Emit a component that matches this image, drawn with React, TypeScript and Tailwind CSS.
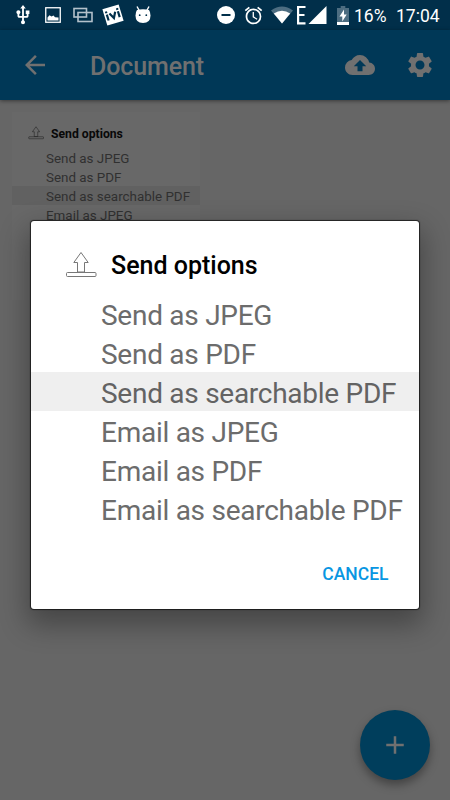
import React from 'react';
import { MdArrowBack, MdCloudUpload, MdSettings, MdAdd, MdUsb, MdAlarm } from 'react-icons/md';

const options = [
  'Send as JPEG',
  'Send as PDF',
  'Send as searchable PDF',
  'Email as JPEG',
  'Email as PDF',
  'Email as searchable PDF',
];

const SELECTED = 'Send as searchable PDF';

const UploadIcon: React.FC<{ className?: string }> = ({ className }) => (
  <svg viewBox="0 0 32 28" className={className} fill="none" stroke="currentColor" strokeWidth="1">
    <path d="M16 1.5 L23.2 11.5 H19.5 V21 H12.5 V11.5 H8.8 Z" strokeLinejoin="round" />
    <rect x="1.5" y="21.5" width="29.5" height="4" rx="1" />
  </svg>
);

const StatusBar: React.FC = () => (
  <div className="flex h-[30px] items-center bg-[#012f4a] text-white">
    <MdUsb className="ml-[12px] h-[22px] w-[22px]" />
    <svg viewBox="0 0 16 16" className="ml-[11px] h-4 w-4">
      <rect x="0.75" y="0.75" width="14.5" height="14.5" fill="none" stroke="white" strokeWidth="1.3" />
      <path d="M2.5 13.5 V10.5 L4.5 8.2 L6.5 9.5 L8.5 8.5 L10 10.2 L13.5 10.5 V13.5 Z" fill="white" />
    </svg>
    <svg viewBox="0 0 20 16" className="ml-[12px] h-4 w-5 text-[#b3c1cb]" fill="none" stroke="currentColor" strokeWidth="1.6">
      <rect x="1" y="1.5" width="12.5" height="8.5" />
      <rect x="5" y="5.5" width="14" height="9" />
    </svg>
    <svg viewBox="0 0 22 22" className="ml-[9px] h-[22px] w-[22px]">
      <g transform="rotate(-17 11 11)">
        <rect x="2.5" y="2.5" width="17" height="17" fill="white" />
        <g stroke="#012f4a" strokeWidth="2.2" fill="none">
          <path d="M5.2 8.8 V15 M8 8.6 L11 14.2 L14 8.6 M16.8 8.8 V15" />
          <path d="M5.2 5.6 V7.4 M16.8 5.6 V7.4" />
        </g>
      </g>
    </svg>
    <svg viewBox="0 0 16 18" className="ml-[11px] h-[18px] w-4 text-white">
      <path d="M2 0.5 L4.2 4.5 M14 0.5 L11.8 4.5" stroke="currentColor" strokeWidth="1.4" />
      <path d="M2 4 Q8 2.4 14 4 Q15.5 6 15.5 9.5 Q15.5 17 8 17 Q0.5 17 0.5 9.5 Q0.5 6 2 4 Z" fill="currentColor" />
      <circle cx="4.7" cy="9.2" r="0.9" fill="#012f4a" />
      <circle cx="11.3" cy="9.2" r="0.9" fill="#012f4a" />
    </svg>

    <svg viewBox="0 0 18 18" className="ml-[66px] h-[18px] w-[18px]">
      <circle cx="9" cy="9" r="9" fill="white" />
      <path d="M4.5 9 H13.5" stroke="#012f4a" strokeWidth="2" />
    </svg>
    <MdAlarm className="ml-[8px] h-[21px] w-[21px]" />
    <svg viewBox="0 0 22 18" className="ml-[7px] h-[18px] w-[22px]">
      <path d="M11 17.5 L0 4.5 Q11 -3.5 22 4.5 Z" fill="#4d6d81" />
      <path d="M11 17.5 L2.8 7.6 Q11 1.8 19.2 7.6 Z" fill="white" />
    </svg>
    <svg viewBox="0 0 32 20" className="ml-[4px] h-5 w-8">
      <path d="M8.5 2 H1.1 V18.3 H8.5 M1 10 H7.5" fill="none" stroke="white" strokeWidth="2.2" />
      <path d="M29.5 1 V19 H11.5 Z" fill="white" />
    </svg>
    <svg viewBox="0 0 12 19" className="ml-[8px] h-[19px] w-[12px]">
      <path d="M3.7 0 H8.3 V2 H12 V19 H0 V2 H3.7 Z" fill="#4d6d81" />
      <rect y="16" width="12" height="3" fill="white" />
      <path d="M7 3.5 L2.5 10.5 H5.3 V15.5 L9.7 8.6 H7 Z" fill="white" />
    </svg>
    <span className="ml-[5px] w-[33px] whitespace-nowrap pt-[3px] text-[17.5px] leading-none">16%</span>
    <span className="ml-[9px] whitespace-nowrap pt-[3px] text-[17.5px] leading-none">17:04</span>
  </div>
);

const AppBar: React.FC = () => (
  <header className="relative flex h-[70px] items-center bg-[#003857] text-[#707070] shadow-[0_1px_4px_rgba(0,0,0,0.45)]">
    <MdArrowBack className="ml-[20px] h-[30px] w-[30px]" />
    <h1 className="ml-[40px] pt-[2px] text-[25px] font-medium leading-none tracking-[-0.1px]">Document</h1>
    <MdCloudUpload className="ml-auto h-[30px] w-[30px]" />
    <MdSettings className="ml-[30px] mr-[15px] h-[30px] w-[30px]" />
  </header>
);

/** Thumbnail of the scanned page behind the dialog. */
const PagePreview: React.FC = () => (
  <div className="ml-[12px] mt-[12px] h-[188px] w-[188px] bg-[#686868] pt-[11px]">
    <div className="flex h-[20px] items-center">
      <UploadIcon className="ml-[16px] h-[14px] w-4 text-[#1a1a1a]" />
      <span className="ml-[7px] whitespace-nowrap pt-[2px] text-[12.2px] font-bold leading-none text-[#080808]">Send options</span>
    </div>
    <ul className="mt-[5px]">
      {options.slice(0, 4).map((label) => (
        <li
          key={label}
          className={`flex h-[19px] items-center whitespace-nowrap pl-[34px] pt-[2px] text-[13.4px] leading-none text-[#303030] ${
            label === SELECTED ? 'bg-[#616161]' : ''
          }`}
        >
          {label}
        </li>
      ))}
    </ul>
  </div>
);

const SendDialog: React.FC = () => (
  <div
    role="dialog"
    className="absolute left-[31px] top-[221px] flex h-[388px] w-[388px] flex-col rounded-[3px] bg-white shadow-[0_0_1px_1px_rgba(0,0,0,0.65),0_12px_28px_4px_rgba(0,0,0,0.32)]"
  >
    <div className="flex h-[73px] items-center pt-[14px]">
      <UploadIcon className="ml-[34px] h-[28px] w-8 text-[#777]" />
      <h2 className="ml-[14px] whitespace-nowrap pt-[2px] text-[25px] font-medium leading-none text-black">Send options</h2>
    </div>
    <ul>
      {options.map((label) => (
        <li
          key={label}
          className={`flex h-[39px] items-center whitespace-nowrap pl-[70px] pt-[4px] text-[28px] leading-none tracking-[-0.27px] ${
            label === SELECTED ? 'bg-[#efefef] text-[#636363]' : 'text-[#6c6c6c]'
          }`}
        >
          {label}
        </li>
      ))}
    </ul>
    <button className="mr-[30.5px] mt-[38px] self-end text-[17.5px] font-medium leading-none text-[#0896e2]">
      CANCEL
    </button>
  </div>
);

const App: React.FC = () => {
  return (
    <div className="relative h-[800px] w-[450px] overflow-hidden bg-[#666666] font-['Roboto','Liberation_Sans',sans-serif]">
      <StatusBar />
      <AppBar />
      <PagePreview />
      <button className="absolute bottom-[20px] right-[20px] flex h-[70px] w-[70px] items-center justify-center rounded-full bg-[#003e5c] text-[#707070] shadow-[0_5px_10px_rgba(0,0,0,0.35)]">
        <MdAdd className="h-[30px] w-[30px]" />
      </button>
      <SendDialog />
    </div>
  );
};

export default App;
